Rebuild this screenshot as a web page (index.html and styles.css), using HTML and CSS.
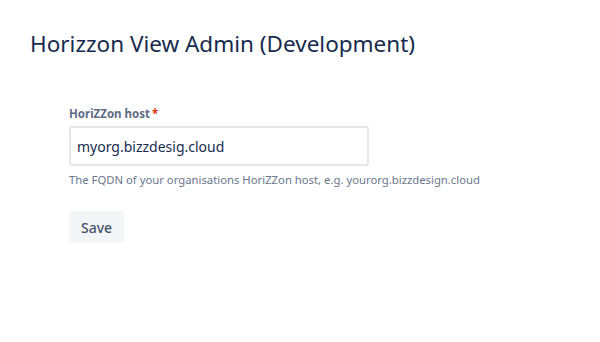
FILE: index.html
```html
<!DOCTYPE html>
<html>
<head>
<meta charset="utf-8">
<link rel="stylesheet" href="styles.css">
</head>
<body>
<div class="page">
  <h1 class="title">Horizzon View Admin (Development)</h1>
  <form class="form">
    <label class="label" for="host">HoriZZon host<span class="req">*</span></label>
    <input class="input" id="host" type="text" value="myorg.bizzdesig.cloud">
    <div class="help">The FQDN of your organisations HoriZZon host, e.g. yourorg.bizzdesign.cloud</div>
    <button class="btn" type="button">Save</button>
  </form>
</div>
</body>
</html>
```
FILE: styles.css
```css
html, body {
  margin: 0;
  padding: 0;
  background: #fff;
}
body {
  font-family: "Noto Sans", "Open Sans", sans-serif;
  color: #172B4D;
}
.page {
  padding: 28px 30px 0 30px;
}
.title {
  margin: 0;
  font-size: 22.5px;
  font-weight: 400;
  line-height: 32px;
  color: #172B4D;
}
.form {
  display: flex;
  flex-direction: column;
  align-items: flex-start;
  padding-left: 39px;
  margin-top: 46px;
}
.label {
  font-size: 11.5px;
  font-weight: 700;
  color: #5E6C84;
  line-height: 16px;
  margin-bottom: 4px;
}
.req {
  color: #DE350B;
  margin-left: 2px;
}
.input {
  box-sizing: border-box;
  width: 300px;
  height: 40px;
  border: 2px solid #E4E6EA;
  border-radius: 3px;
  padding: 0 6px;
  font-family: inherit;
  font-size: 14px;
  color: #172B4D;
  background: #fff;
  outline: none;
}
.help {
  font-size: 11.3px;
  color: #6B778C;
  line-height: 16px;
  margin-top: 6px;
}
.btn {
  margin-top: 23px;
  height: 32px;
  padding: 0 12px;
  border: none;
  border-radius: 3px;
  background: #F4F5F7;
  color: #42526E;
  font-family: inherit;
  font-size: 14px;
  font-weight: 500;
}
```
